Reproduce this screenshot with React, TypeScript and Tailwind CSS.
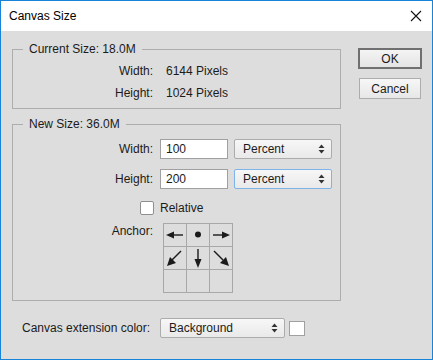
import React from "react";

const font = { fontFamily: '"Liberation Sans", Arial, sans-serif' };

const UpDown = () => (
  <svg width="7" height="10" viewBox="0 0 7 10" className="shrink-0">
    <path d="M3.5 0.5 L6.5 4 L0.5 4 Z" fill="#333" />
    <path d="M3.5 9.5 L6.5 6 L0.5 6 Z" fill="#333" />
  </svg>
);

type SelectProps = { value: string; width: string; focus?: boolean };

const Select = ({ value, width, focus }: SelectProps) => (
  <div
    className={`${width} h-[20px] flex items-center justify-between pl-[8px] pr-[6px] rounded-[2px] border bg-gradient-to-b from-[#f7f7f7] to-[#e9e9e9] ${
      focus ? "border-[#7eb4ea]" : "border-[#acacac]"
    }`}
  >
    <span className="leading-none">{value}</span>
    <UpDown />
  </div>
);

const Arrow = ({ kind }: { kind: string }) => {
  if (kind === "dot")
    return (
      <svg width="22" height="22" viewBox="0 0 22 22">
        <circle cx="11" cy="10.5" r="3" fill="#1b1b1b" />
      </svg>
    );
  if (kind === "left")
    return (
      <svg width="22" height="22" viewBox="0 0 22 22">
        <line x1="9" y1="11" x2="19" y2="11" stroke="#1b1b1b" strokeWidth="1.4" />
        <path d="M2 11 L10 7.5 L10 14.5 Z" fill="#1b1b1b" />
      </svg>
    );
  if (kind === "right")
    return (
      <svg width="22" height="22" viewBox="0 0 22 22">
        <line x1="3" y1="11" x2="13" y2="11" stroke="#1b1b1b" strokeWidth="1.4" />
        <path d="M20 11 L12 7.5 L12 14.5 Z" fill="#1b1b1b" />
      </svg>
    );
  if (kind === "down")
    return (
      <svg width="22" height="22" viewBox="0 0 22 22">
        <line x1="11" y1="2" x2="11" y2="13" stroke="#1b1b1b" strokeWidth="1.4" />
        <path d="M11 21 L7.5 12 L14.5 12 Z" fill="#1b1b1b" />
      </svg>
    );
  if (kind === "downleft")
    return (
      <svg width="22" height="22" viewBox="0 0 22 22">
        <line x1="17" y1="4" x2="8" y2="13" stroke="#1b1b1b" strokeWidth="1.4" />
        <path d="M3 19 L6 10 L12 16 Z" fill="#1b1b1b" />
      </svg>
    );
  if (kind === "downright")
    return (
      <svg width="22" height="22" viewBox="0 0 22 22">
        <line x1="4" y1="4" x2="13" y2="13" stroke="#1b1b1b" strokeWidth="1.4" />
        <path d="M19 19 L16 10 L10 16 Z" fill="#1b1b1b" />
      </svg>
    );
  return null;
};

const anchorCells = ["left", "dot", "right", "downleft", "down", "downright", "", "", ""];

export default function App() {
  return (
    <div
      className="w-[433px] h-[360px] border border-[#1883d7] flex flex-col text-[12px] text-[#1b1b1b]"
      style={font}
    >
      {/* title bar */}
      <div className="h-[30px] bg-white flex items-center justify-between pl-[8px] pr-[10px]">
        <span className="text-[12px] text-black">Canvas Size</span>
        <svg width="12" height="12" viewBox="0 0 12 12">
          <path d="M1 1 L11 11 M11 1 L1 11" stroke="#111" strokeWidth="1.1" />
        </svg>
      </div>

      <div className="flex-1 bg-[#dddddd] flex pl-[11px] pt-[11px]">
        <div className="w-[329px] flex flex-col">
          <fieldset className="border border-[#adadad] px-0 pb-[4px]">
            <legend className="ml-[10px] px-[6px] leading-[14px]">Current Size: 18.0M</legend>
            <div className="mt-[4px] flex flex-col">
              <div className="flex h-[22px] items-center">
                <span className="w-[140px] text-right">Width:</span>
                <span className="ml-[13px]">6144 Pixels</span>
              </div>
              <div className="flex h-[22px] items-center">
                <span className="w-[140px] text-right">Height:</span>
                <span className="ml-[13px]">1024 Pixels</span>
              </div>
            </div>
          </fieldset>

          <fieldset className="mt-[8px] border border-[#adadad] px-0 pb-[7px]">
            <legend className="ml-[10px] px-[6px] leading-[14px]">New Size: 36.0M</legend>
            <div className="mt-[8px] flex items-center h-[20px]">
              <span className="w-[140px] text-right">Width:</span>
              <div className="ml-[7px] w-[68px] h-[20px] bg-white border border-[#a0a0a0] flex items-center pl-[5px]">
                100
              </div>
              <div className="ml-[6px]">
                <Select value="Percent" width="w-[98px]" />
              </div>
            </div>
            <div className="mt-[10px] flex items-center h-[20px]">
              <span className="w-[140px] text-right">Height:</span>
              <div className="ml-[7px] w-[68px] h-[20px] bg-white border border-[#a0a0a0] flex items-center pl-[5px]">
                200
              </div>
              <div className="ml-[6px]">
                <Select value="Percent" width="w-[98px]" focus />
              </div>
            </div>
            <div className="mt-[12px] flex items-center h-[14px]">
              <div className="ml-[127px] w-[14px] h-[14px] bg-white border border-[#8f8f8f] rounded-[2px]" />
              <span className="ml-[6px]">Relative</span>
            </div>
            <div className="mt-[8px] flex items-start">
              <span className="w-[140px] text-right leading-[16px]">Anchor:</span>
              <div className="ml-[10px] grid grid-cols-3 border-l border-t border-[#a8a8a8] w-[70px]">
                {anchorCells.map((k, i) => (
                  <div
                    key={i}
                    className="w-[23px] h-[23px] border-r border-b border-[#a8a8a8] flex items-center justify-center"
                  >
                    {k && <Arrow kind={k} />}
                  </div>
                ))}
              </div>
            </div>
          </fieldset>

          <div className="mt-[17px] flex items-center h-[20px]">
            <span className="w-[148px] pl-[10px]">Canvas extension color:</span>
            <Select value="Background" width="w-[125px]" />
            <div className="ml-[4px] w-[16px] h-[15px] bg-white border border-[#a0a0a0]" />
          </div>
        </div>

        <div className="ml-[17px] mt-[6px] flex flex-col">
          <button className="w-[64px] h-[21px] border-2 border-[#707070] bg-gradient-to-b from-[#f4f4f4] to-[#e4e4e4] flex items-center justify-center">
            OK
          </button>
          <button className="mt-[9px] ml-[1px] w-[62px] h-[21px] border border-[#adadad] bg-gradient-to-b from-[#f7f7f7] to-[#e7e7e7] flex items-center justify-center">
            Cancel
          </button>
        </div>
      </div>
    </div>
  );
}
